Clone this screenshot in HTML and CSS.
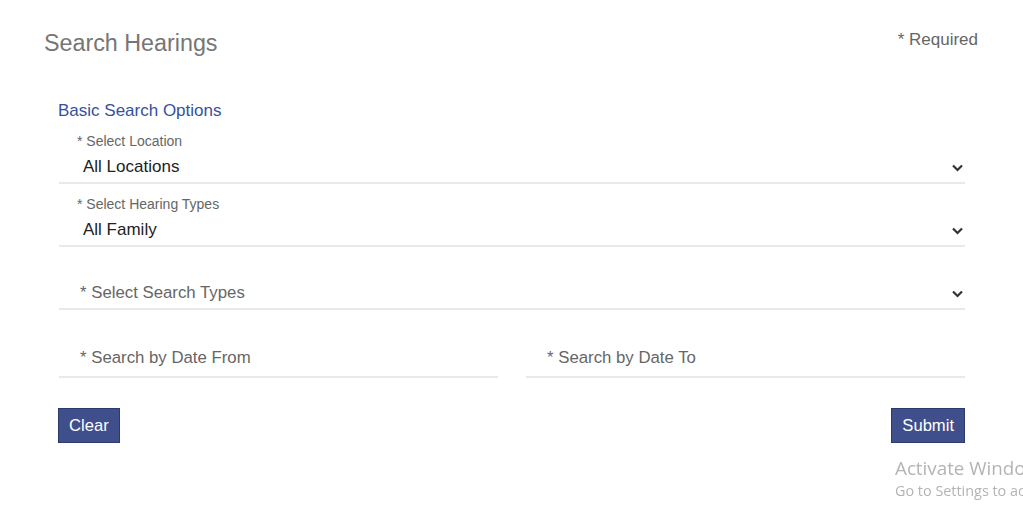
FILE: index.html
```html
<!DOCTYPE html>
<html>
<head>
<meta charset="utf-8">
<link rel="stylesheet" href="styles.css">
</head>
<body>
<div class="page">
  <header class="head">
    <h1 class="title">Search Hearings</h1>
    <div class="required">* Required</div>
  </header>
  <section class="form">
    <h2 class="section-title">Basic Search Options</h2>
    <div class="field">
      <div class="label">* Select Location</div>
      <div class="select"><span class="value">All Locations</span><svg class="chev" width="11" height="8" viewBox="0 0 11 8"><path d="M1 1.5 L5.5 6 L10 1.5" fill="none" stroke="#333" stroke-width="2.2"/></svg></div>
    </div>
    <div class="field">
      <div class="label">* Select Hearing Types</div>
      <div class="select"><span class="value">All Family</span><svg class="chev" width="11" height="8" viewBox="0 0 11 8"><path d="M1 1.5 L5.5 6 L10 1.5" fill="none" stroke="#333" stroke-width="2.2"/></svg></div>
    </div>
    <div class="field">
      <div class="label"></div>
      <div class="select"><span class="placeholder">* Select Search Types</span><svg class="chev" width="11" height="8" viewBox="0 0 11 8"><path d="M1 1.5 L5.5 6 L10 1.5" fill="none" stroke="#333" stroke-width="2.2"/></svg></div>
    </div>
    <div class="dates">
      <div class="date"><span class="placeholder">* Search by Date From</span></div>
      <div class="date"><span class="placeholder">* Search by Date To</span></div>
    </div>
    <div class="actions">
      <button class="btn">Clear</button>
      <button class="btn">Submit</button>
    </div>
  </section>
</div>
<div class="watermark">
  <div class="wm1">Activate Windows</div>
  <div class="wm2">Go to Settings to activate Windows.</div>
</div>
</body>
</html>
```
FILE: styles.css
```css
html, body { margin: 0; padding: 0; background: #fff; overflow: hidden; }
body { font-family: "Liberation Sans", Arial, sans-serif; width: 1023px; height: 510px; }
.page { padding: 0 45px 0 44px; }
.head { display: flex; justify-content: space-between; align-items: flex-start; padding-top: 30px; }
.title { margin: 0; font-weight: normal; font-size: 23.3px; line-height: 26px; color: #767676; }
.required { font-size: 17px; line-height: 18px; color: #666; padding-top: 1px; }
.form { padding: 0 13px 0 14px; margin-top: 45px; }
.section-title { margin: 0; font-weight: normal; font-size: 17px; line-height: 20px; color: #34519c; }
.field { margin-left: 1px; border-bottom: 2px solid #e9e9e9; padding-top: 12px; }
.label { font-size: 14px; line-height: 16px; height: 16px; color: #666; padding-left: 18px; }
.select { display: flex; justify-content: space-between; align-items: center; height: 30px; padding: 3px 2px 0 24px; }
.value { font-size: 17px; color: #222; }
.placeholder { font-size: 16.8px; color: #666; }
.field .placeholder { margin-left: -3px; }
.chev { margin-top: 2px; }
.dates { display: flex; gap: 28px; margin-left: 1px; margin-top: 28px; }
.date { flex: 1; border-bottom: 2px solid #e9e9e9; height: 36px; padding: 2px 0 0 21px; display: flex; align-items: center; }
.actions { display: flex; justify-content: space-between; margin-top: 30px; }
.btn { font-family: "Liberation Sans", Arial, sans-serif; font-size: 16.6px; color: #fff; background: #3f4f8b; border: 1px solid #2c3a6e; height: 35px; padding: 0 10px; border-radius: 0; }
.watermark { position: fixed; left: 895px; top: 456px; white-space: nowrap; font-family: "Open Sans", "Noto Sans", sans-serif; color: #b4b4b4; }
.wm1 { font-size: 18.8px; line-height: 25px; }
.wm2 { font-size: 14.4px; line-height: 20px; }
```
